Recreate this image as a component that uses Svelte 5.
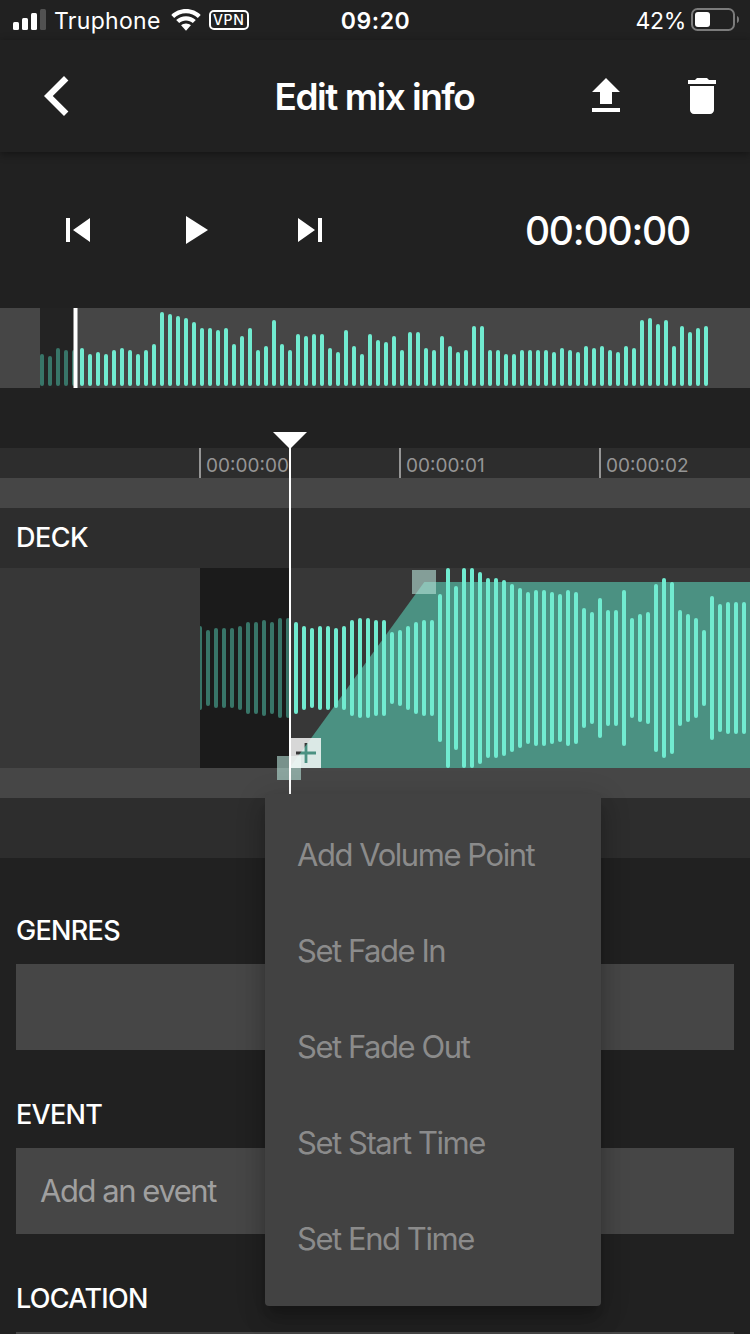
<script>
	const overview = [
		32, 30, 38, 36, 36, 38, 32, 34, 32, 36, 38, 36, 32, 36, 42, 74, 72, 70, 68, 64, 58,
		58, 56, 58, 42, 50, 58, 36, 40, 66, 42, 36, 52, 50, 52, 52, 38, 34, 56, 40, 32, 52,
		46, 44, 50, 36, 54, 54, 38, 36, 50, 40, 34, 36, 60, 60, 36, 36, 32, 32, 36, 36, 36,
		36, 34, 38, 36, 34, 40, 38, 40, 36, 34, 40, 38, 66, 68, 62, 66, 40, 60, 54, 58, 60
	];
	const deck = [
		84, 76, 80, 80, 80, 84, 92, 92, 96, 92, 100, 100, 92, 84, 80, 84, 84, 80, 84, 96,
		100, 100, 96, 96, 72, 76, 84, 92, 96, 96, 148, 200, 164, 200, 200, 192, 180, 180,
		176, 168, 160, 152, 156, 156, 152, 148, 156, 152, 120, 112, 140, 116, 116, 156, 100,
		108, 112, 168, 180, 172, 116, 108, 100, 76, 144, 128, 132, 132, 132
	];
	const ticks = ['00:00:00', '00:00:01', '00:00:02'];
	const menuItems = ['Add Volume Point', 'Set Fade In', 'Set Fade Out', 'Set Start Time', 'Set End Time'];
	const fields = [
		{ label: 'GENRES', placeholder: '' },
		{ label: 'EVENT', placeholder: 'Add an event' },
		{ label: 'LOCATION', placeholder: '' }
	];

	let menuOpen = $state(true);
</script>

<div class="screen">
	<div class="status">
		<div class="side">
			<svg class="signal" width="33" height="22" viewBox="0 0 33 22">
				<rect x="0" y="13" width="6" height="8" rx="1.5" />
				<rect x="9" y="9" width="6" height="12" rx="1.5" />
				<rect x="18" y="4" width="6" height="17" rx="1.5" />
				<rect x="27" y="0" width="6" height="21" rx="1.5" opacity=".22" />
			</svg>
			<span class="carrier">Truphone</span>
			<svg class="wifi" width="30" height="22" viewBox="0 0 30 22">
				<path d="M15 0C9.200 0 4 2.300 0.300 5.900L3.200 8.900C6.300 5.900 10.400 4.200 15 4.200S23.700 5.900 26.800 8.900L29.700 5.900C26 2.300 20.800 0 15 0Z" />
				<path d="M15 7.300C11.200 7.300 7.800 8.800 5.200 11.100L8.200 14.100C10 12.500 12.400 11.400 15 11.400S20 12.500 21.800 14.100L24.800 11.100C22.200 8.800 18.800 7.300 15 7.300Z" />
				<path d="M15 14.500C13.100 14.500 11.400 15.200 10.100 16.300L15 21.700L19.900 16.300C18.600 15.200 16.900 14.500 15 14.500Z" />
			</svg>
			<span class="vpn">VPN</span>
		</div>
		<span class="clock">09:20</span>
		<div class="side right">
			<span class="percent">42%</span>
			<svg width="49" height="24" viewBox="0 0 49 24">
				<rect x="1" y="1" width="42" height="21" rx="5.500" fill="none" stroke="#7b7b7b" stroke-width="2" />
				<rect x="4" y="4" width="15" height="15" rx="3" />
				<path d="M46 8c1.400.6 2 1.800 2 3.500s-.6 2.900-2 3.500z" fill="#7b7b7b" />
			</svg>
		</div>
	</div>

	<header>
		<button aria-label="Back">
			<svg width="48" height="48" viewBox="0 0 48 48">
				<path d="M12 24L32 4L36.400 8.400L20.800 24L36.400 39.600L32 44Z" />
			</svg>
		</button>
		<h1>Edit mix info</h1>
		<div class="actions">
			<button aria-label="Upload">
				<svg width="48" height="48" viewBox="0 0 24 24">
					<path d="M9 16h6v-6h4l-7-7-7 7h4zm-4 2h14v2H5z" />
				</svg>
			</button>
			<button aria-label="Delete">
				<svg width="48" height="48" viewBox="0 0 24 24">
					<path d="M6 19c0 1.100.9 2 2 2h8c1.100 0 2-.9 2-2V7H6v12zM19 4h-3.500l-1-1h-5l-1 1H5v2h14V4z" />
				</svg>
			</button>
		</div>
	</header>

	<section class="controls">
		<div class="transport">
			<button aria-label="Previous">
				<svg width="48" height="48" viewBox="0 0 24 24"><path d="M6 6h2v12H6zm3.500 6l8.500 6V6z" /></svg>
			</button>
			<button aria-label="Play">
				<svg width="48" height="48" viewBox="0 0 24 24"><path d="M8 5v14l11-7z" /></svg>
			</button>
			<button aria-label="Next">
				<svg width="48" height="48" viewBox="0 0 24 24"><path d="M6 18l8.500-6L6 6v12zM16 6v12h2V6h-2z" /></svg>
			</button>
		</div>
		<span class="time">00:00:00</span>
	</section>

	<svg class="overview" width="750" height="80" viewBox="0 0 750 80">
		{#each overview as h, i}
			<rect class="bar" x={40 + i * 8} y={78 - h} width="4" height={h} rx="2" />
		{/each}
		<rect class="shade" x="40" y="0" width="35" height="80" />
		<rect x="73.500" y="0" width="4" height="80" />
	</svg>

	<section class="timeline">
		<div class="ruler">
			{#each ticks as tick}
				<span class="tick">{tick}</span>
			{/each}
		</div>
		<div class="band"></div>
		<h2>DECK</h2>
		<svg class="deck" width="750" height="200" viewBox="0 0 750 200">
			<path class="volume" d="M289.500 200L424.300 14H750V200Z" />
			<svg x="200" y="0" width="550" height="200">
				{#each deck as h, i}
					<rect class="bar" x={i * 8 - 2} y={100 - h / 2} width="4" height={h} rx="2" />
				{/each}
			</svg>
			<rect class="shade" x="200" y="0" width="90" height="200" />
		</svg>
		<div class="band"></div>
		<div class="footer"></div>

		<span class="handle start"></span>
		<span class="handle end"></span>
		<!-- the cross is cut out of the square so the track shows through -->
		<svg
			class="add"
			width="30"
			height="30"
			viewBox="0 0 30 30"
			role="button"
			tabindex="0"
			aria-label="Volume options"
			onclick={() => (menuOpen = !menuOpen)}
			onkeydown={(e) => e.key === 'Enter' && (menuOpen = !menuOpen)}
		>
			<path fill-rule="evenodd" d="M0 0H30V30H0ZM13.600 5V13.600H5V16.400H13.600V25H16.400V16.400H25V13.600H16.400V5Z" />
		</svg>
		<svg class="playhead" width="34" height="362" viewBox="0 0 34 362">
			<path d="M0 0H34L18 16V362H16V16Z" />
		</svg>

		{#if menuOpen}
			<ul class="menu">
				{#each menuItems as item}
					<li>{item}</li>
				{/each}
			</ul>
		{/if}
	</section>

	<form>
		{#each fields as field}
			<label>
				<span>{field.label}</span>
				<input type="text" placeholder={field.placeholder} />
			</label>
		{/each}
	</form>
</div>

<style>
	:global(body) {
		background: #212121;
	}

	.screen {
		width: 750px;
		height: 1334px;
		overflow: hidden;
		background: #212121;
		color: #fff;
		font-family: Inter, "Liberation Sans", sans-serif;
	}

	svg {
		display: block;
		flex: none;
		fill: #fff;
	}

	button {
		padding: 0;
		border: none;
		background: none;
		cursor: pointer;
	}

	.status {
		display: grid;
		grid-template-columns: 1fr auto 1fr;
		align-items: center;
		height: 40px;
		padding: 0 10px 0 13px;
		font-size: 23px;
		line-height: 38px;
	}

	.side {
		display: flex;
		align-items: center;
	}

	.right {
		justify-content: flex-end;
		gap: 5px;
	}

	.carrier,
	.clock,
	.percent {
		padding-top: 2px;
	}

	.carrier {
		margin: 0 10px 0 8px;
		letter-spacing: 0.3px;
	}

	.vpn {
		box-sizing: border-box;
		width: 40px;
		height: 20px;
		margin-left: 8px;
		border: 2px solid #fff;
		border-radius: 5px;
		font-size: 14px;
		font-weight: 500;
		line-height: 16px;
		letter-spacing: 0.6px;
		text-align: center;
	}

	.clock {
		margin-right: 2px;
		font-weight: 600;
		letter-spacing: 0.6px;
	}

	.percent {
		letter-spacing: -0.3px;
	}

	header {
		display: grid;
		grid-template-columns: 1fr auto 1fr;
		align-items: center;
		height: 112px;
		padding: 0 24px 0 32px;
		box-shadow: 0 2px 8px rgba(0, 0, 0, 0.4);
	}

	header button {
		justify-self: start;
	}

	h1 {
		margin: 0 9px 0 0;
		font-size: 37px;
		font-weight: 600;
		letter-spacing: -1.5px;
	}

	.actions {
		display: flex;
		justify-content: flex-end;
		gap: 48px;
	}

	.controls {
		display: flex;
		align-items: center;
		justify-content: space-between;
		height: 156px;
		padding: 0 60px 0 54px;
	}

	.transport {
		display: flex;
		gap: 68px;
	}

	.time {
		font-size: 39px;
		font-weight: 500;
		letter-spacing: -1.2px;
	}

	.overview {
		margin-bottom: 60px;
		background: #464646;
	}

	.bar {
		fill: #71ebd0;
	}

	.shade {
		fill: rgba(0, 0, 0, 0.5);
	}

	.timeline {
		position: relative;
	}

	.ruler {
		display: flex;
		height: 30px;
		padding-left: 199px;
		overflow: hidden;
		background: #2d2d2d;
	}

	.tick {
		box-sizing: border-box;
		flex: none;
		width: 200px;
		padding-left: 5px;
		border-left: 2px solid #959595;
		color: #959595;
		font-size: 19px;
		line-height: 35px;
	}

	.band {
		height: 30px;
		background: #464646;
	}

	h2 {
		height: 60px;
		margin: 0;
		padding-left: 16px;
		background: #2d2d2d;
		font-size: 27px;
		font-weight: 500;
		line-height: 60px;
		letter-spacing: -0.5px;
	}

	.deck {
		background: #373737;
	}

	.volume {
		fill: #4b9182;
	}

	.footer {
		height: 60px;
		background: #2d2d2d;
	}

	.handle {
		position: absolute;
		width: 24px;
		height: 24px;
		background: rgba(183, 227, 217, 0.6);
	}

	.start {
		left: 277px;
		top: 308px;
	}

	.end {
		left: 412px;
		top: 122px;
	}

	.add {
		position: absolute;
		left: 291px;
		top: 290px;
		fill: rgba(255, 255, 255, 0.8);
	}

	.playhead {
		position: absolute;
		left: 273px;
		top: -16px;
	}

	.menu {
		position: absolute;
		z-index: 1;
		left: 265px;
		top: 346px;
		box-sizing: border-box;
		width: 336px;
		margin: 0;
		padding: 16px 0;
		border-radius: 4px;
		background: #424242;
		box-shadow:
			0 10px 10px -6px rgba(0, 0, 0, 0.2),
			0 16px 20px 2px rgba(0, 0, 0, 0.14),
			0 6px 28px 4px rgba(0, 0, 0, 0.12);
		list-style: none;
	}

	.menu li {
		padding: 0 0 6px 32px;
		color: #8b8b8b;
		font-size: 31px;
		line-height: 90px;
		letter-spacing: -1.45px;
	}

	form {
		padding: 42px 16px 0;
	}

	label {
		display: block;
		height: 184px;
	}

	label span {
		display: block;
		height: 64px;
		font-size: 27px;
		font-weight: 500;
		line-height: 62px;
		letter-spacing: -0.7px;
	}

	input {
		display: block;
		box-sizing: border-box;
		width: 100%;
		height: 86px;
		padding: 0 24px 2px;
		border: none;
		border-radius: 0;
		background: #464646;
		color: #fff;
		font: inherit;
		font-size: 31px;
		letter-spacing: -1.45px;
	}

	input::placeholder {
		color: #9f9f9f;
		opacity: 1;
	}
</style>
